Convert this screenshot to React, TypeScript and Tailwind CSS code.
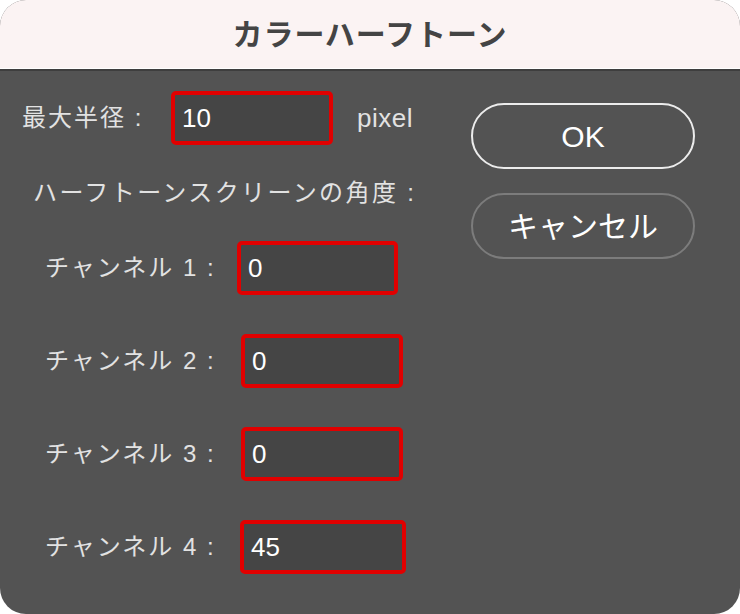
const font = { fontFamily: '"Liberation Sans", "Noto Sans CJK JP", sans-serif' }

const channels = [
  { label: 'チャンネル 1 :', value: '0', ml: 'ml-[0px]', w: 'w-[161px]' },
  { label: 'チャンネル 2 :', value: '0', ml: 'ml-[4px]', w: 'w-[162px]' },
  { label: 'チャンネル 3 :', value: '0', ml: 'ml-[4px]', w: 'w-[162px]' },
  { label: 'チャンネル 4 :', value: '45', ml: 'ml-[3px]', w: 'w-[166px]' },
]

function Field({ value, className }: { value: string; className: string }) {
  return (
    <div
      className={`h-[54px] flex items-center rounded-[5px] border-[4px] border-[#e10000] bg-[#454545] pl-[7px] text-[26px] text-white ${className}`}
    >
      {value}
    </div>
  )
}

export default function App() {
  return (
    <div className="w-[740px] h-[614px] bg-white" style={font}>
      <div className="w-full h-full rounded-[26px] overflow-hidden bg-[#535353] flex flex-col">
        <div className="h-[68px] bg-[#fbf3f3] flex items-center justify-center">
          <span className="text-[30px] font-bold text-[#444444] tracking-[1px]">カラーハーフトーン</span>
        </div>
        <div className="h-px bg-white" />
        <div className="h-[2px] bg-[#3e3e3e]" />

        <div className="flex flex-1">
          <div className="flex-1 flex flex-col">
            <div className="flex items-center mt-[20px] pl-[22px]">
              <span className="w-[149px] text-[24px] tracking-[2px] text-[#e2e2e2]">最大半径 :</span>
              <Field value="10" className="w-[162px] h-[52px]" />
              <span className="ml-[24px] text-[26px] tracking-[0.5px] text-[#e2e2e2]">pixel</span>
            </div>

            <div className="mt-[33px] pl-[33px] text-[24px] tracking-[2.4px] leading-[30px] text-[#e2e2e2]">
              ハーフトーンスクリーンの角度 :
            </div>

            <div className="mt-[33px] pl-[45px] flex flex-col gap-[39px]">
              {channels.map((c) => (
                <div key={c.label} className="flex items-center">
                  <span className="w-[192px] text-[24px] tracking-[2px] whitespace-pre text-[#e2e2e2]">
                    {c.label}
                  </span>
                  <Field value={c.value} className={`${c.ml} ${c.w}`} />
                </div>
              ))}
            </div>
          </div>

          <div className="w-[224px] mr-[45px] pt-[32px] flex flex-col gap-[24px]">
            <button className="h-[66px] rounded-full border-2 border-[#ececec] text-[30px] text-white">
              OK
            </button>
            <button className="h-[66px] rounded-full border-2 border-[#7c7c7c] text-[30px] text-white">
              キャンセル
            </button>
          </div>
        </div>
      </div>
    </div>
  )
}
